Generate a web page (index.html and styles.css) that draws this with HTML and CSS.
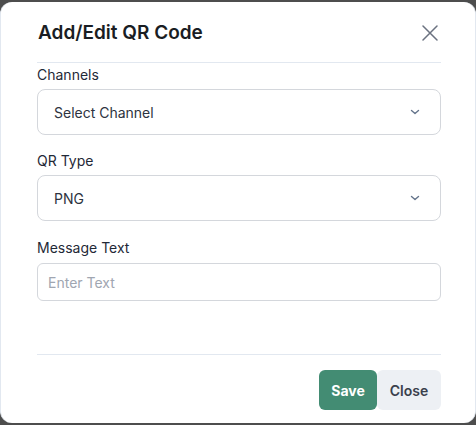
FILE: index.html
```html
<!DOCTYPE html>
<html lang="en">
<head>
<meta charset="utf-8">
<title>Add/Edit QR Code</title>
<link rel="stylesheet" href="styles.css">
</head>
<body>
<div class="modal">
  <div class="modal-header">
    <h2 class="modal-title">Add/Edit QR Code</h2>
    <button class="close-btn" aria-label="Close">
      <svg width="16" height="16" viewBox="0 0 16 16" fill="none" stroke="#6b7280" stroke-width="1.5" stroke-linecap="round"><path d="M1 1L15 15M15 1L1 15"/></svg>
    </button>
  </div>
  <div class="modal-body">
    <div class="field">
      <label class="field-label">Channels</label>
      <div class="select">
        <span>Select Channel</span>
        <svg class="chev" width="10" height="6" viewBox="0 0 10 6" fill="none" stroke="#64748b" stroke-width="1.4" stroke-linecap="round" stroke-linejoin="round"><path d="M1.5 1.5L5 4.5L8.5 1.5"/></svg>
      </div>
    </div>
    <div class="field">
      <label class="field-label">QR Type</label>
      <div class="select">
        <span>PNG</span>
        <svg class="chev" width="10" height="6" viewBox="0 0 10 6" fill="none" stroke="#64748b" stroke-width="1.4" stroke-linecap="round" stroke-linejoin="round"><path d="M1.5 1.5L5 4.5L8.5 1.5"/></svg>
      </div>
    </div>
    <div class="field field-text">
      <label class="field-label">Message Text</label>
      <div class="input"><span class="placeholder">Enter Text</span></div>
    </div>
  </div>
  <div class="modal-footer">
    <button class="btn btn-save">Save</button>
    <button class="btn btn-close">Close</button>
  </div>
</div>
</body>
</html>
```

FILE: styles.css
```css
* { box-sizing: border-box; }
html, body { margin: 0; padding: 0; }
body {
  background: #4d4d4d;
  width: 476px;
  height: 425px;
  overflow: hidden;
  font-family: Inter, "Noto Sans", sans-serif;
  color: #1f2937;
}
.modal {
  margin-top: 2px;
  height: 421px;
  background: #fff;
  border-radius: 12px;
  border-left: 1px solid #e2e8f0;
  border-right: 1px solid #e2e8f0;
  padding: 0 34px 0 36px;
  display: flex;
  flex-direction: column;
}
.modal-header {
  display: flex;
  align-items: center;
  justify-content: space-between;
  padding: 17px 0 15px;
  border-bottom: 1px solid #e2e8f0;
}
.modal-title {
  margin: 0 0 0 1px;
  font-size: 19px;
  line-height: 28px;
  font-weight: 600;
  color: #1a1d23;
}
.close-btn {
  border: 0;
  background: none;
  padding: 0;
  margin-right: 3px;
  width: 16px;
  height: 16px;
  display: flex;
}
.modal-body {
  padding-top: 2px;
  display: flex;
  flex-direction: column;
  gap: 16px;
}
.field {
  display: flex;
  flex-direction: column;
}
.field-text { margin-top: 1px; }
.field-text .field-label { margin-bottom: 5px; }
.field-label {
  font-size: 14px;
  line-height: 20px;
  color: #1f2937;
  margin-bottom: 4px;
}
.select {
  height: 46px;
  border: 1px solid #d4d7dc;
  border-radius: 8px;
  display: flex;
  align-items: center;
  justify-content: space-between;
  padding: 0 20px 0 16px;
  font-size: 14px;
  color: #2d3340;
}
.input {
  height: 38px;
  border: 1px solid #d4d7dc;
  border-radius: 6px;
  display: flex;
  align-items: center;
  padding: 0 10px;
  font-size: 14px;
}
.placeholder { color: #a0a6b1; }
.modal-footer {
  margin-top: 53px;
  border-top: 1px solid #e2e8f0;
  padding-top: 15px;
  display: flex;
  justify-content: flex-end;
}
.btn {
  height: 40px;
  border: 0;
  border-radius: 6px;
  font-family: inherit;
  font-size: 14px;
  font-weight: 600;
  padding: 0 12px;
}
.btn-save {
  width: 58px;
  background: #438c73;
  color: #fff;
  font-weight: 700;
}
.btn-close {
  width: 64px;
  background: #edf0f4;
  color: #3a404c;
}
```
